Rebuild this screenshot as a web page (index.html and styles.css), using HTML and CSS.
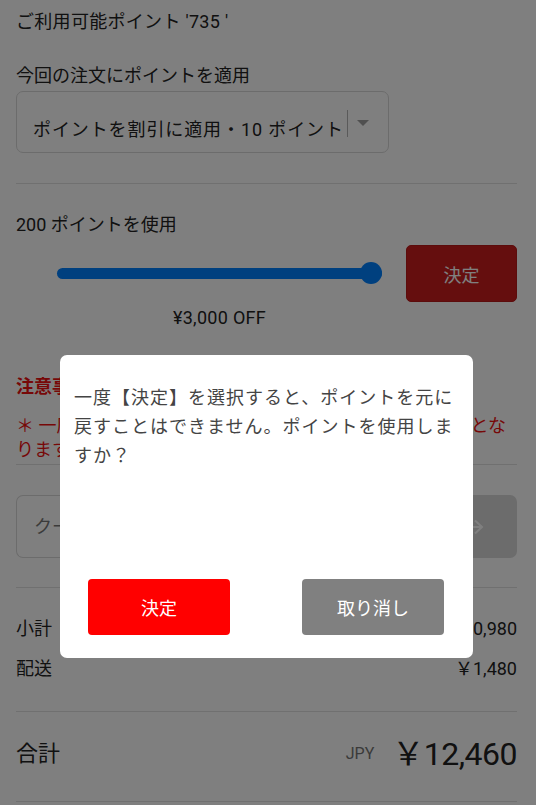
FILE: index.html
```html
<!DOCTYPE html>
<html lang="ja">
<head>
  <meta charset="UTF-8">
  <title>ポイント</title>
  <link rel="stylesheet" href="styles.css">
</head>
<body>
<div class="page">
  <div class="points">
    <p class="avail">ご利用可能ポイント '735 '</p>
    <p class="label">今回の注文にポイントを適用</p>
    <div class="select">
      <span class="select-text">ポイントを割引に適用・10 ポイント</span>
      <span class="select-sep"></span>
      <span class="select-arrow"></span>
    </div>
  </div>

  <div class="use">
    <p class="label">200 ポイントを使用</p>
    <div class="slider-row">
      <div class="slider">
        <div class="track"></div>
        <div class="thumb"></div>
      </div>
      <button class="btn-apply">決定</button>
    </div>
    <p class="off">¥3,000 OFF</p>
  </div>

  <div class="notice">
    <p class="notice-title">注意事項</p>
    <p class="notice-text">＊ 一度使用したポイントは、ご注文キャンセル後も無効となります。</p>
  </div>

  <div class="coupon">
    <div class="coupon-input">クーポンコードを入力</div>
    <div class="coupon-btn">
      <svg width="20" height="16" viewBox="0 0 20 16">
        <path d="M1 8H18M11 1.5L18 8L11 14.5" fill="none" stroke="#fff" stroke-width="2"/>
      </svg>
    </div>
  </div>

  <div class="sums">
    <div class="sum-row"><span>小計</span><span>￥10,980</span></div>
    <div class="sum-row"><span>配送</span><span>￥1,480</span></div>
  </div>

  <div class="total">
    <span class="total-label">合計</span>
    <span class="total-cur">JPY</span>
    <span class="total-num">￥12,460</span>
  </div>
</div>

<div class="mask"></div>
<div class="dialog">
  <p class="dialog-text">一度【決定】を選択すると、ポイントを元に戻すことはできません。ポイントを使用しますか？</p>
  <div class="dialog-btns">
    <button class="btn-ok">決定</button>
    <button class="btn-cancel">取り消し</button>
  </div>
</div>
</body>
</html>
```

FILE: styles.css
```css
* {
  margin: 0;
  padding: 0;
  box-sizing: border-box;
}

body {
  font-family: Roboto, "Noto Sans CJK JP", sans-serif;
  font-size: 18px;
  line-height: 24px;
  color: #222;
  background-color: #fff;
}

button {
  font-family: inherit;
  border: 0;
}

.page {
  padding: 10px 19px 0 16px;
}

.points {
  padding-bottom: 30px;
  border-bottom: 1px solid #e0e0e0;
}

.avail {
  margin-bottom: 30px;
  letter-spacing: 0.3px;
}

.label {
  margin-bottom: 3px;
}

.select {
  display: flex;
  align-items: center;
  width: 373px;
  height: 62px;
  padding: 16px 0 0 16px;
  border: 1px solid #d8d8d8;
  border-radius: 7px;
}

.select-text {
  white-space: nowrap;
  letter-spacing: 0.9px;
}

.select-sep {
  width: 1px;
  height: 27px;
  margin: -14px 0 0 3px;
  background-color: #b4b4b4;
}

.select-arrow {
  margin: -14px 0 0 9px;
  border-left: 6px solid transparent;
  border-right: 6px solid transparent;
  border-top: 6px solid #a0a0a0;
}

.use {
  padding-top: 29px;
}

.slider-row {
  display: flex;
  align-items: center;
  margin-top: 8px;
}

.slider {
  position: relative;
  width: 325px;
  height: 22px;
  margin-left: 41px;
}

.track {
  position: absolute;
  left: 0;
  right: 0;
  top: 5px;
  height: 11px;
  border-radius: 6px;
  background-color: #0080ff;
}

.thumb {
  position: absolute;
  right: 0;
  top: -1px;
  width: 22px;
  height: 22px;
  border-radius: 50%;
  background-color: #0080ff;
}

.btn-apply {
  width: 111px;
  height: 57px;
  margin-left: auto;
  border: 1px solid #b81818;
  border-radius: 5px;
  background-color: #ca1c1c;
  color: #fff;
  font-size: 18px;
}

.off {
  width: 325px;
  margin: 4px 0 0 41px;
  text-align: center;
  letter-spacing: 0.3px;
}

.notice {
  padding-top: 45px;
  padding-bottom: 2px;
  border-bottom: 1px solid #e0e0e0;
}

.notice-title {
  font-weight: bold;
  color: #ee1111;
  margin-bottom: 15px;
}

.notice-text {
  color: #ee1111;
}

.coupon {
  display: flex;
  margin-top: 30px;
  height: 63px;
}

.coupon-input {
  flex: 1;
  display: flex;
  align-items: center;
  padding-left: 17px;
  border: 1px solid #d8d8d8;
  border-right: 0;
  border-radius: 7px 0 0 7px;
  color: #777;
}

.coupon-btn {
  width: 86px;
  display: flex;
  align-items: center;
  justify-content: center;
  border-radius: 0 7px 7px 0;
  background-color: #d8d8d8;
}

.sums {
  margin-top: 29px;
  padding: 29px 0 30px;
  border-top: 1px solid #e0e0e0;
  border-bottom: 1px solid #e0e0e0;
}

.sum-row {
  display: flex;
  justify-content: space-between;
}

.sum-row + .sum-row {
  margin-top: 16px;
}

.total {
  display: flex;
  align-items: center;
  padding: 22px 0 27px;
  line-height: 40px;
  border-bottom: 1px solid #e0e0e0;
}

.total-label {
  font-size: 22px;
}

.total-cur {
  margin-left: auto;
  margin-right: 18px;
  font-size: 16px;
  color: #757575;
}

.total-num {
  font-size: 32px;
  letter-spacing: -0.5px;
}

.mask {
  position: fixed;
  left: 0;
  top: 0;
  right: 0;
  bottom: 0;
  background-color: rgba(0, 0, 0, 0.5);
}

.dialog {
  position: absolute;
  left: 60px;
  top: 355px;
  width: 413px;
  height: 303px;
  display: flex;
  flex-direction: column;
  padding: 28px 14px 23px;
  border-radius: 7px;
  background-color: #fff;
}

.dialog-text {
  line-height: 29px;
  letter-spacing: 1px;
  color: #444;
}

.dialog-btns {
  display: flex;
  justify-content: space-between;
  margin-top: auto;
  padding: 0 15px 0 14px;
}

.dialog-btns button {
  width: 142px;
  height: 56px;
  border-radius: 4px;
  font-size: 18px;
  color: #fff;
}

.btn-ok {
  background-color: #ff0000;
}

.btn-cancel {
  background-color: #808080;
}
```
